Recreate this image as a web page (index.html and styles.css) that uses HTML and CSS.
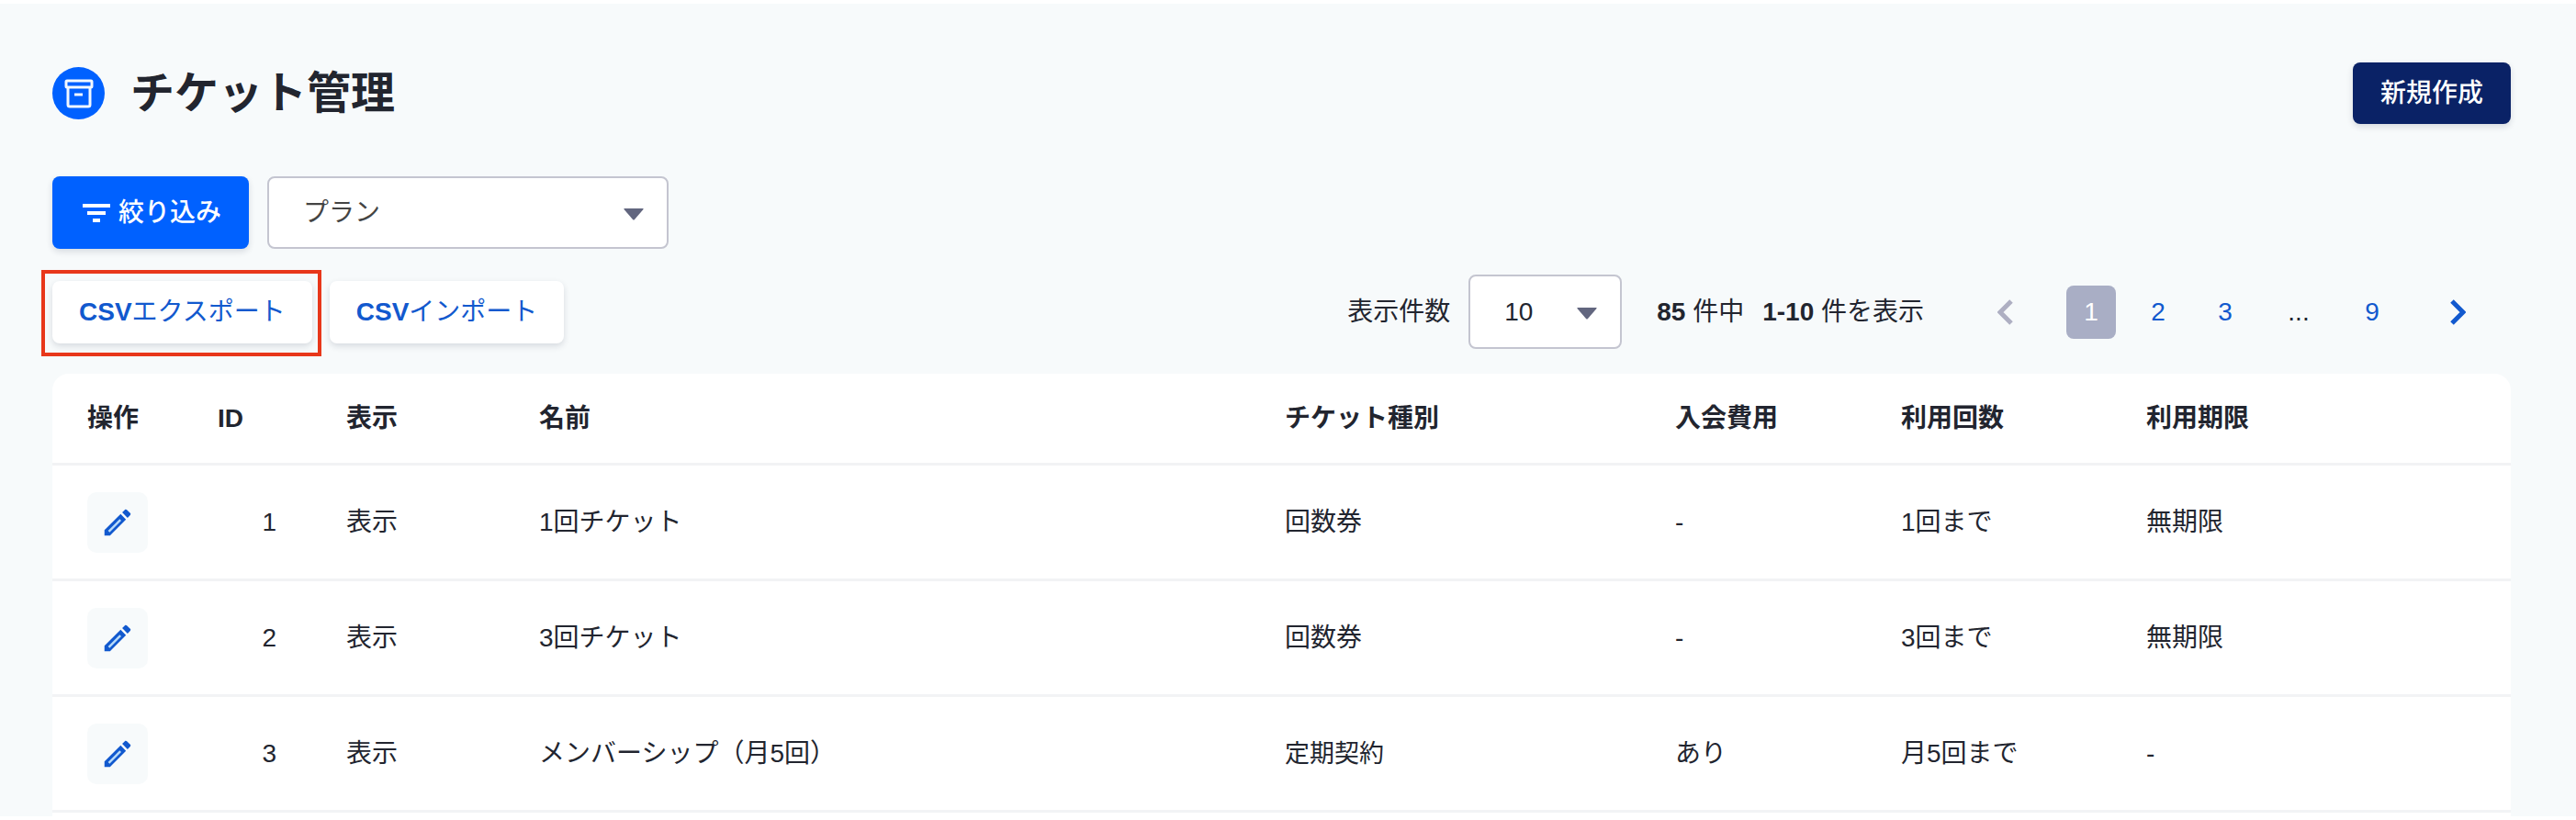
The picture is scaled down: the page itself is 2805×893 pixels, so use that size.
FILE: index.html
```html
<!DOCTYPE html>
<html lang="ja">
<head>
	<meta charset="utf-8">
	<title>チケット管理</title>
	<link rel="stylesheet" href="styles.css">
</head>
<body>

<svg class="sprite">
	<symbol id="pencil" viewBox="0 0 24 24">
		<path d="M3 17.2V21h3.8L17.8 9.9 14.1 6.2zM17.7 3c-.3 0-.5.1-.7.3l-1.8 1.8 3.7 3.8 1.8-1.9a1 1 0 0 0 0-1.4l-2.3-2.3a1 1 0 0 0-.7-.3z"/>
		<path class="pencil-core" d="M6 18.2L14 10.2"/>
	</symbol>
	<symbol id="arrow" viewBox="0 0 22 13">
		<path d="M1 0h20q1 0 .5 1L12 12q-1 1-2 0L.5 1Q0 0 1 0z"/>
	</symbol>
</svg>

<main class="page">
	<header class="page-header">
		<span class="page-icon">
			<svg viewBox="0 0 32 32">
				<rect x="2" y="2" width="28" height="7" rx="1"/>
				<path d="M4 9v19q0 2 2 2h20q2 0 2-2V9"/>
				<path d="M11 17h9"/>
			</svg>
		</span>
		<h1>チケット管理</h1>
		<button type="button" class="btn btn-create">新規作成</button>
	</header>

	<form class="filters">
		<button type="button" class="btn btn-filter">
			<svg viewBox="0 0 30 20"><path d="M0 0h30v4H0zM5 8h20v4H5zM11 16h8v4h-8z"/></svg>
			絞り込み
		</button>
		<div class="select select-plan">
			<select aria-label="プラン">
				<option>プラン</option>
			</select>
			<svg class="select-arrow"><use href="#arrow"/></svg>
		</div>
	</form>

	<div class="toolbar">
		<div class="marked">
			<button type="button" class="btn btn-csv"><b>CSV</b>エクスポート</button>
		</div>
		<button type="button" class="btn btn-csv"><b>CSV</b>インポート</button>

		<div class="paging">
			<label for="perPage">表示件数</label>
			<div class="select select-count">
				<select id="perPage">
					<option>10</option>
				</select>
				<svg class="select-arrow"><use href="#arrow"/></svg>
			</div>
			<p class="total"><span><b>85</b> 件中</span><span><b>1-10</b> 件を表示</span></p>
			<nav class="pages">
				<a href="#" class="step prev" aria-label="前へ"><svg viewBox="0 0 18 28"><path d="M15 2L3 14l12 12"/></svg></a>
				<a href="#" class="current">1</a>
				<a href="#">2</a>
				<a href="#">3</a>
				<span>...</span>
				<a href="#">9</a>
				<a href="#" class="step next" aria-label="次へ"><svg viewBox="0 0 18 28"><path d="M3 2l12 12L3 26"/></svg></a>
			</nav>
		</div>
	</div>

	<div class="card">
		<table>
			<thead>
				<tr>
					<th class="col-edit">操作</th>
					<th class="col-id">ID</th>
					<th class="col-show">表示</th>
					<th>名前</th>
					<th class="col-type">チケット種別</th>
					<th class="col-fee">入会費用</th>
					<th class="col-times">利用回数</th>
					<th class="col-limit">利用期限</th>
				</tr>
			</thead>
			<tbody>
				<tr>
					<td><button type="button" class="edit" aria-label="編集"><svg><use href="#pencil"/></svg></button></td>
					<td class="num">1</td>
					<td>表示</td>
					<td>1回チケット</td>
					<td>回数券</td>
					<td>-</td>
					<td>1回まで</td>
					<td>無期限</td>
				</tr>
				<tr>
					<td><button type="button" class="edit" aria-label="編集"><svg><use href="#pencil"/></svg></button></td>
					<td class="num">2</td>
					<td>表示</td>
					<td>3回チケット</td>
					<td>回数券</td>
					<td>-</td>
					<td>3回まで</td>
					<td>無期限</td>
				</tr>
				<tr>
					<td><button type="button" class="edit" aria-label="編集"><svg><use href="#pencil"/></svg></button></td>
					<td class="num">3</td>
					<td>表示</td>
					<td>メンバーシップ（月5回）</td>
					<td class="contract">定期契約</td>
					<td>あり</td>
					<td>月5回まで</td>
					<td>-</td>
				</tr>
			</tbody>
		</table>
	</div>
</main>

</body>
</html>
```

FILE: styles.css
```css
*{box-sizing: border-box;}

body{margin: 0;padding-top: 4px;background: #fff;color: #22252f;font-family: "Liberation Sans", "Noto Sans CJK JP", sans-serif;font-size: 28px;line-height: 40px;}
button,select{font: inherit;color: inherit;}
a{text-decoration: none;}
.sprite{display: none;}

.page{background: #f7fafb;padding: 64px 71px 0 57px;}

/* header */
.page-header{display: flex;align-items: center;margin-bottom: 57px;}
.page-icon{display: flex;align-items: center;justify-content: center;width: 57px;height: 57px;border-radius: 50%;background: #0061ff;}
.page-icon svg{width: 32px;height: 32px;fill: none;stroke: #f2f8ff;stroke-width: 3;}
h1{margin: 0 auto 0 28px;font-size: 48px;line-height: 64px;font-weight: 700;}

/* buttons */
.btn{display: flex;align-items: center;justify-content: center;border: 0;border-radius: 8px;padding: 0 29px;white-space: nowrap;box-shadow: 0 3px 7px rgba(20,30,60,.14);font-weight: 500;}
.btn-create{height: 67px;padding: 0 30px;background: #0a2266;color: #fff;}
.btn-filter{height: 79px;padding: 0 30px 0 33px;gap: 9px;background: #0061ff;color: #fff;}
.btn-filter svg{width: 30px;height: 20px;fill: #fff;}
.btn-csv{height: 68px;background: #fff;color: #1259ce;font-weight: 400;}

/* selects */
.select{position: relative;}
.select select{appearance: none;width: 100%;height: 100%;border: 2px solid #c4c5d0;border-radius: 8px;background: #fff;padding: 0 37px;}
.select-arrow{position: absolute;right: 27px;top: 50%;width: 22px;height: 13px;margin-top: -5px;fill: #62667f;pointer-events: none;}
.select-plan{width: 437px;height: 79px;color: #444;}
.select-count{width: 167px;height: 81px;margin: 0 38px 0 20px;}

.filters{display: flex;gap: 20px;margin-bottom: 28px;}

.toolbar{display: flex;align-items: center;margin-bottom: 27px;}
.marked{position: relative;margin-right: 19px;}
.marked::after{content: "";position: absolute;top: -12px;right: -10px;bottom: -14px;left: -12px;border: 4px solid #e8371a;pointer-events: none;}

/* paging */
.paging{display: flex;align-items: center;margin-left: auto;}
.total{display: flex;gap: 20px;margin: 0;}
.pages{display: flex;align-items: center;gap: 19px;margin-left: 80px;margin-right: 49px;}
.pages a,.pages span{width: 54px;line-height: 58px;text-align: center;border-radius: 8px;}
.pages a{color: #1259ce;}
.pages span{width: 68px;}
.pages a.current{background: #a9aec5;color: #fff;}
.pages a.step{display: flex;width: 18px;}
.pages a.prev{margin-right: 38px;}
.pages a.next{margin-left: 38px;}
.step svg{width: 18px;height: 28px;fill: none;stroke: #1259ce;stroke-width: 5;}
.prev svg{stroke: #aeafc2;}

/* table */
.card{background: #fff;border-radius: 18px 18px 0 0;padding-bottom: 4px;}
table{width: 100%;table-layout: fixed;border-collapse: separate;border-spacing: 0;}
th,td{height: 126px;padding: 0 0 0 38px;text-align: left;border-bottom: 3px solid #f2f3f5;white-space: nowrap;}
th{height: 100px;font-weight: 700;}
.col-edit{width: 142px;}
.col-id{width: 140px;}
.col-show{width: 210px;}
.col-type{width: 425px;}
.col-fee{width: 246px;}
.col-times{width: 267px;}
.col-limit{width: 435px;}
.num{padding-right: 38px;text-align: right;}
.contract{font-size: 27px;}
.edit{display: flex;align-items: center;justify-content: center;width: 66px;height: 66px;padding: 0;border: 0;border-radius: 10px;background: #f7fafb;}
.edit svg{width: 38px;height: 38px;fill: #1259ce;}
.pencil-core{fill: none;stroke: #b9dcfa;stroke-width: 1.5;}
```
